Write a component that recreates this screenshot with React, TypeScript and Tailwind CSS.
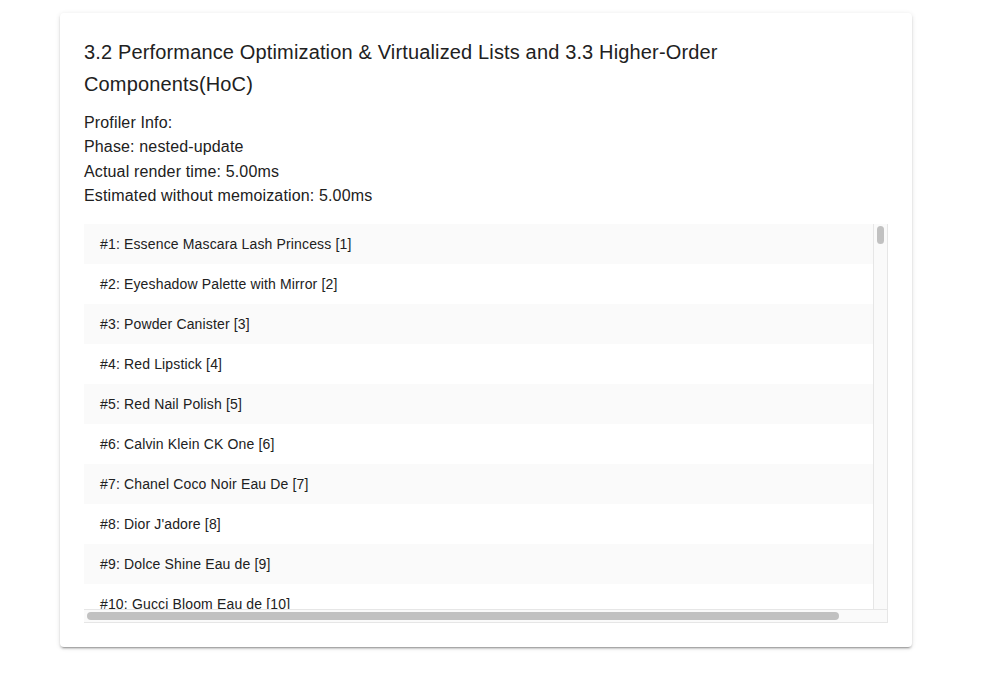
import React from "react";

const products: string[] = [
  "Essence Mascara Lash Princess",
  "Eyeshadow Palette with Mirror",
  "Powder Canister",
  "Red Lipstick",
  "Red Nail Polish",
  "Calvin Klein CK One",
  "Chanel Coco Noir Eau De",
  "Dior J'adore",
  "Dolce Shine Eau de",
  "Gucci Bloom Eau de",
];

const App: React.FC = () => {
  return (
    <div className="min-h-[680px] bg-white pt-[13px] font-['Liberation_Sans',Arial,sans-serif] tracking-[0.15px] text-[#212121]">
      <div className="ml-[60px] w-[852px] rounded-[4px] bg-white p-6 shadow-[0_3px_1px_-2px_rgba(0,0,0,0.2),0_2px_2px_0_rgba(0,0,0,0.14),0_1px_5px_0_rgba(0,0,0,0.12)]">
        <h2 className="-mt-px text-[20px] leading-[32px]">
          3.2 Performance Optimization &amp; Virtualized Lists and 3.3 Higher-Order
          <br />
          Components(HoC)
        </h2>

        {/* Profiler output */}
        <div className="mt-[11px] h-[98px] text-[16px] leading-[24.4px]">
          <div>Profiler Info:</div>
          <div>Phase: nested-update</div>
          <div>Actual render time: 5.00ms</div>
          <div>Estimated without memoization: 5.00ms</div>
        </div>

        {/* Virtualized list with its scrollbars */}
        <div className="mt-[15px] grid h-[399px] w-[804px] grid-cols-[1fr_15px] grid-rows-[1fr_14px]">
          <div className="overflow-hidden">
            {products.map((name, i) => (
              <div
                key={name}
                className={`flex h-[40px] items-center whitespace-nowrap pl-4 text-[14px] ${
                  i % 2 === 0 ? "bg-[#fafafa]" : "bg-white"
                }`}
              >
                #{i + 1}: {name} [{i + 1}]
              </div>
            ))}
          </div>
          <div className="border-x border-[#e6e6e6] bg-[#fafafa] px-[3px] pt-[2px]">
            <div className="h-[18px] w-full rounded-full bg-[#c1c1c1]" />
          </div>
          <div className="flex items-center border-y border-[#e6e6e6] bg-[#fafafa] pl-[3px]">
            <div className="h-[8px] w-[752px] rounded-full bg-[#c1c1c1]" />
          </div>
          <div className="border-y border-r border-[#e6e6e6] bg-[#fafafa]" />
        </div>
      </div>
    </div>
  );
};

export default App;
